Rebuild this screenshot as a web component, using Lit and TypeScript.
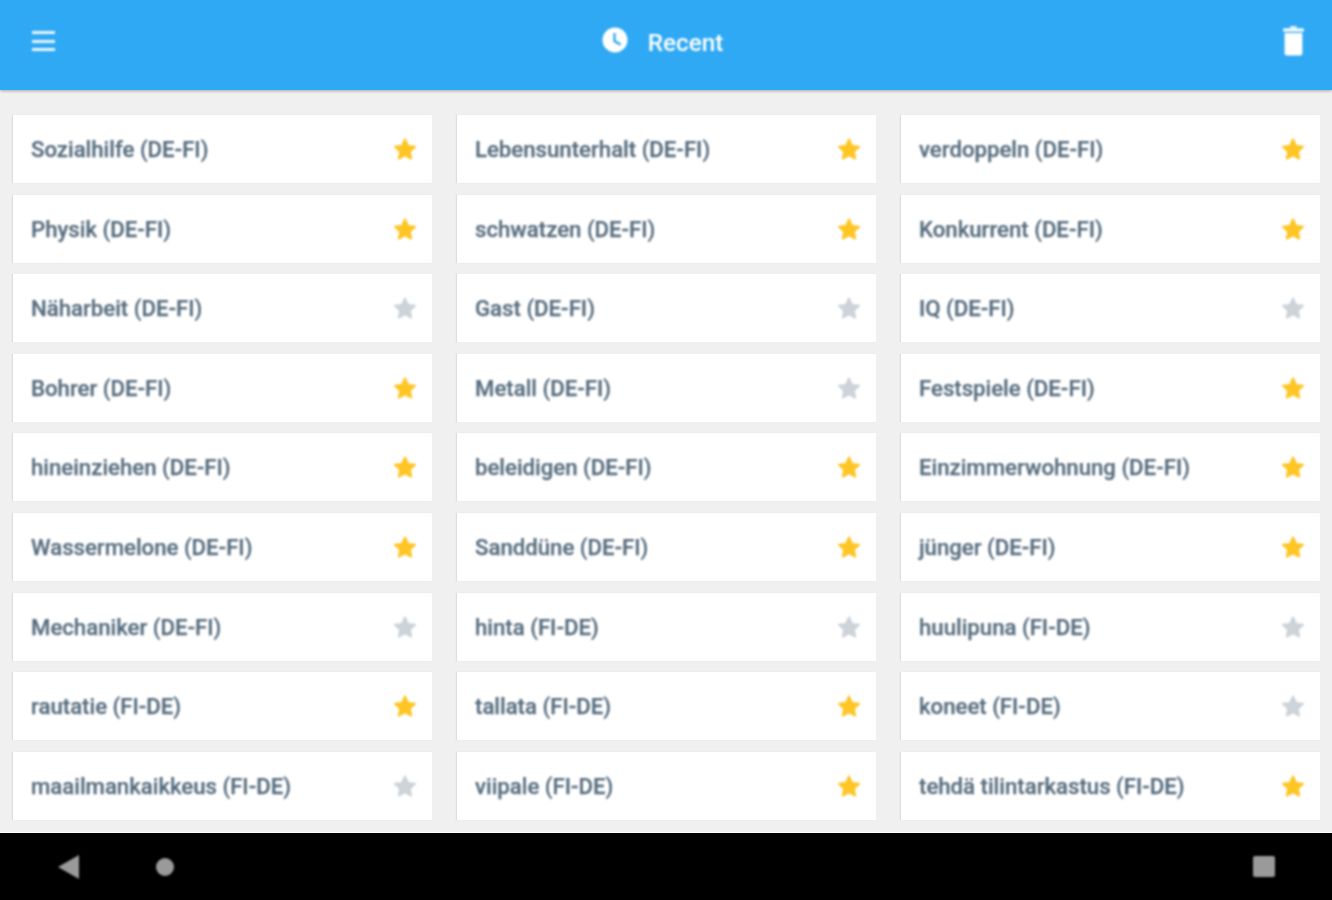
import { LitElement, html, css, svg } from "lit";
import { customElement } from "lit/decorators.js";

type Row = [string, boolean];
const rows: Row[] = [
  ["Sozialhilfe (DE-FI)", true], ["Lebensunterhalt (DE-FI)", true], ["verdoppeln (DE-FI)", true],
  ["Physik (DE-FI)", true], ["schwatzen (DE-FI)", true], ["Konkurrent (DE-FI)", true],
  ["Näharbeit (DE-FI)", false], ["Gast (DE-FI)", false], ["IQ (DE-FI)", false],
  ["Bohrer (DE-FI)", true], ["Metall (DE-FI)", false], ["Festspiele (DE-FI)", true],
  ["hineinziehen (DE-FI)", true], ["beleidigen (DE-FI)", true], ["Einzimmerwohnung (DE-FI)", true],
  ["Wassermelone (DE-FI)", true], ["Sanddüne (DE-FI)", true], ["jünger (DE-FI)", true],
  ["Mechaniker (DE-FI)", false], ["hinta (FI-DE)", false], ["huulipuna (FI-DE)", false],
  ["rautatie (FI-DE)", true], ["tallata (FI-DE)", true], ["koneet (FI-DE)", false],
  ["maailmankaikkeus (FI-DE)", false], ["viipale (FI-DE)", true], ["tehdä tilintarkastus (FI-DE)", true],
];

const star = svg`<path d="M12 2.4l3 6.5 7 .9-5.2 4.8 1.4 7L12 18.1l-6.2 3.5 1.4-7L2 9.8l7-.9z" stroke-linejoin="round" stroke-width="2" stroke="currentColor" fill="currentColor"/>`;

@customElement("app-root")
export class AppRoot extends LitElement {
  static styles = css`
    :host { display: block; width: 1332px; height: 900px; overflow: hidden; font-family: Roboto, "Liberation Sans", sans-serif; }
    * { box-sizing: border-box; }
    .page { display: flex; flex-direction: column; height: 900px; background: #f0f0f0; }
    .soft { filter: blur(0.8px); }
    .bar { height: 90px; flex: none; background: #2fa9f4; color: #fff; box-shadow: 0 1px 3px rgba(0,0,0,.3); display: flex; align-items: center; padding: 0 27px 8px 32px; position: relative; z-index: 1; }
    .menu { width: 23px; height: 20px; display: flex; flex-direction: column; justify-content: space-between; }
    .menu i { display: block; height: 3px; background: #e9f5fe; }
    .title { flex: 1; display: flex; align-items: center; justify-content: center; gap: 20px; padding-right: 12px; font-size: 24.3px; font-weight: 500; }
    .title span { position: relative; top: 1px; }
    .clock { width: 26px; height: 26px; display: block; margin-top: -2px; }
    .trash { width: 23px; height: 30px; display: block; margin-top: -1px; }
    .list { flex: 1; display: grid; grid-template-columns: repeat(3, 419px); column-gap: 25px; row-gap: 11.6px; grid-auto-rows: 68px; align-content: start; padding: 25px 12px 0 13px; }
    .card { background: #fff; box-shadow: -1px 0 1px rgba(0,0,0,.08); display: flex; align-items: center; justify-content: space-between; padding: 0 15px 0 18px; color: #566c7e; font-size: 22.2px; font-weight: 500; -webkit-text-stroke: 0.25px #566c7e; }
    .star { width: 24px; height: 24px; display: block; color: #ccd3d9; }
    .star.on { color: #fec524; }
    .sep { height: 1px; flex: none; background: #fff; }
    .nav { height: 67px; flex: none; background: #000; display: flex; align-items: center; padding: 0 57px 0 58px; }
    .back { width: 21px; height: 24px; display: block; }
    .home { width: 18px; height: 18px; border-radius: 50%; background: #9a9a9a; margin-left: 77px; }
    .recents { width: 22px; height: 21px; border-radius: 2px; background: #9a9a9a; margin-left: auto; }
  `;

  render() {
    return html`<div class="page">
      <header class="bar">
        <div class="menu soft"><i></i><i></i><i></i></div>
        <div class="title">
          <svg class="clock soft" viewBox="0 0 26 26"><circle cx="13" cy="13" r="12.5" fill="#fff"/><path d="M12.5 6v8l6 3.6" fill="none" stroke="#2fa9f4" stroke-width="2.4"/></svg>
          <span class="soft">Recent</span>
        </div>
        <svg class="trash soft" viewBox="0 0 24 32"><path d="M8.5 2.5h7V0h-7z" fill="#fff" opacity=".85"/><path d="M1 2.5h22v3.5H1z" fill="#fff"/><path d="M2.5 7.5h19V29a2.5 2.5 0 0 1-2.5 2.5H5A2.5 2.5 0 0 1 2.5 29z" fill="#fff"/></svg>
      </header>
      <main class="list">
        ${rows.map(([t, on]) => html`<div class="card"><span class="soft">${t}</span><svg class="star soft ${on ? "on" : ""}" viewBox="0 0 24 24">${star}</svg></div>`)}
      </main>
      <div class="sep"></div>
      <footer class="nav">
        <svg class="back soft" viewBox="0 0 21 24"><path d="M21 0v24L0 12z" fill="#9a9a9a"/></svg>
        <div class="home soft"></div>
        <div class="recents soft"></div>
      </footer>
    </div>`;
  }
}
